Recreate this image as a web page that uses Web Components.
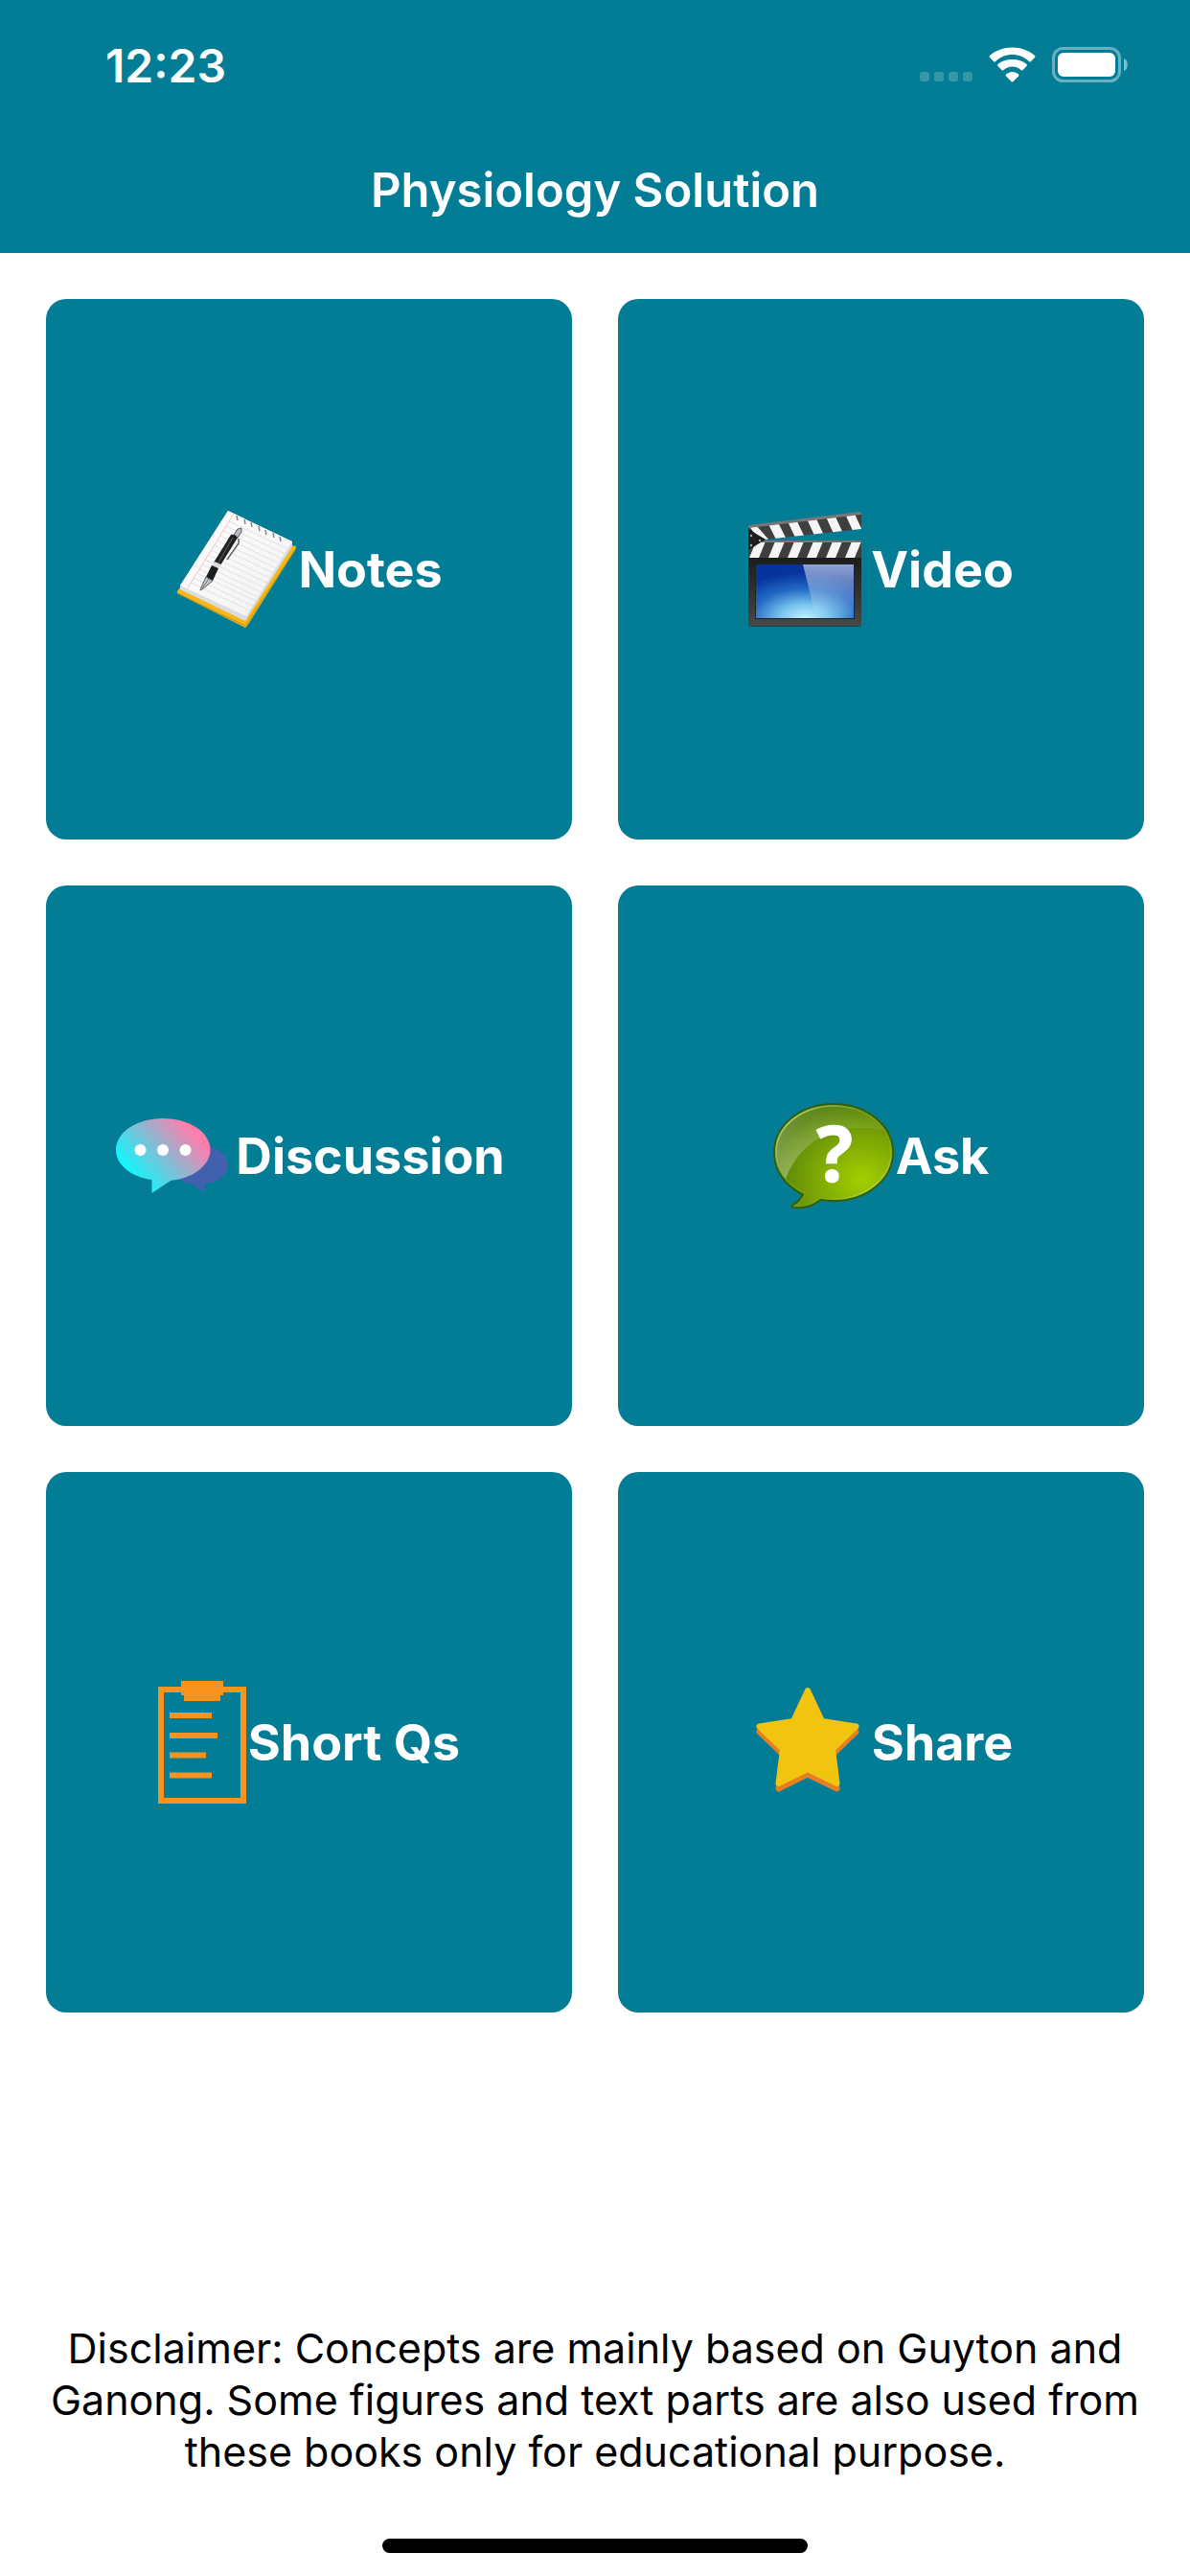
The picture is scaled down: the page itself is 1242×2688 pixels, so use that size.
<!DOCTYPE html>
<html lang="en">
<head>
<meta charset="utf-8">
<meta name="viewport" content="width=device-width, initial-scale=1">
<title>Physiology Solution</title>
<style>
    :root {
        --brand: #037d96;
        --gutter: 48px;
    }

    body {
        margin: 0;
        background: white;
        color: black;
        font-family: Inter, "Liberation Sans", sans-serif;
    }
</style>
</head>
<body>
<app-screen>
    <status-bar slot="header" data-time="12:23"></status-bar>
    <nav-bar slot="header">Physiology Solution</nav-bar>

    <menu-tile>
        <svg slot="icon" width="126" height="126" viewBox="0 0 126 126" aria-hidden="true">
            <defs>
                <linearGradient id="paper" x1="0" y1="0" x2="1" y2="1">
                    <stop offset="0" stop-color="#fff"/>
                    <stop offset="1" stop-color="#f1f1f3"/>
                </linearGradient>
                <clipPath id="sheet"><path d="M55 2 122 34 74 112 5 80Z"/></clipPath>
            </defs>
            <path d="M2 86 5 82 120 38 126 39 125 43 75 122 73 124 2 88Z" fill="#f4b81c"/>
            <path d="M2 88 73 122 126 41" fill="none" stroke="#c98f0b" stroke-width="1"/>
            <path d="M5 80 55 2 122 34 122 39 73 117 5 84Z" fill="#dcdce0"/>
            <path d="M55 2 122 34 74 112 5 80Z" fill="url(#paper)"/>
            <g clip-path="url(#sheet)" stroke="#dfe1e6" stroke-width="1">
                <path d="M56 13 124 45M53 18 121 50M50 23 118 55M47 28 115 60M44 33 112 65M41 38 109 70M37 43 105 75M34 48 102 80M31 53 99 85M28 58 96 90M25 63 93 95M22 67 90 99M19 72 87 104M16 77 84 109"/>
                <path d="M61 5 12 84" stroke="#f6c3c3"/>
            </g>
            <path d="M64 7l1 5M72 11l1 5M79 14l1 5M87 18l1 5M94 22l1 5M102 25l1 5M109 29l1 5" stroke="#85888d" stroke-width="1.5"/>
            <path d="M61 27 65 21 69 20 69 24 65 30Z" fill="#b9bdc1" stroke="#55595d" stroke-width="1"/>
            <path d="M66 31 66 36 54 53" fill="none" stroke="#666" stroke-width="1.5"/>
            <path d="M58 27Q62 26 65 30L47 59 40 56Z" fill="#202123"/>
            <path d="M60 30 45 56" stroke="#53565a" stroke-width="1.2"/>
            <path d="M41 55 48 58 45 62 38 59Z" fill="#d7dadd"/>
            <path d="M38 59 45 62 39 75 32 71Z" fill="#1b1c1e"/>
            <path d="M32 71 39 75 28 84 26 85 27 82Z" fill="#c2c6c9" stroke="#5c6064" stroke-width="1"/>
            <path d="M35 73 28 83" stroke="#74787b" stroke-width="1"/>
        </svg>
        Notes
    </menu-tile>

    <menu-tile>
        <svg slot="icon" width="126" height="126" viewBox="0 0 126 126" aria-hidden="true">
            <defs>
                <linearGradient id="slate" x1="0" y1="0" x2="0" y2="1">
                    <stop offset="0" stop-color="#1c1c1c"/>
                    <stop offset="1" stop-color="#484848"/>
                </linearGradient>
                <radialGradient id="screen" cx=".5" cy="1" r=".85">
                    <stop offset="0" stop-color="#bdf3ff"/>
                    <stop offset=".3" stop-color="#79c4ee"/>
                    <stop offset=".65" stop-color="#2068c4"/>
                    <stop offset="1" stop-color="#06339c"/>
                </radialGradient>
                <linearGradient id="shine" x1="0" y1="0" x2="0" y2="1">
                    <stop offset="0" stop-color="#fff" stop-opacity=".55"/>
                    <stop offset="1" stop-color="#fff" stop-opacity="0"/>
                </linearGradient>
                <clipPath id="upper"><path d="M0 18 118 4V21L18 32 0 22Z"/></clipPath>
                <clipPath id="lower"><path d="M0 34H118V51H0Z"/></clipPath>
            </defs>
            <rect x="0" y="46" width="118" height="77" rx="3" fill="#000" opacity=".35"/>
            <path d="M0 50H118V119Q118 122 115 122H3Q0 122 0 119Z" fill="url(#slate)"/>
            <rect x="7" y="57" width="104" height="58" rx="1" fill="#222"/>
            <rect x="8" y="58" width="102" height="56" fill="url(#screen)"/>
            <path d="M57 58H110V114H71Z" fill="url(#shine)"/>
            <path d="M0 18 118 4V21L18 32 0 22Z" fill="#3f3f3f"/>
            <g clip-path="url(#upper)" fill="#f5f5f5">
                <path d="M0 17H8L23 34H13ZM19 12H30L41 34H30ZM40 11H50L60 32H50ZM60 8H70L80 30H70ZM80 6H90L100 28H90ZM100 3H110L120 25H110Z"/>
            </g>
            <path d="M0 17 116 3 118 4V6L0 20Z" fill="#777"/>
            <path d="M0 33H118V51H0Z" fill="#3f3f3f"/>
            <g clip-path="url(#lower)" fill="#f5f5f5">
                <path d="M1 51 8 34H18L11 51ZM21 51 28 34H38L31 51ZM41 51 48 34H58L51 51ZM61 51 68 34H78L71 51ZM81 51 88 34H98L91 51ZM101 51 108 34H118L111 51Z"/>
            </g>
            <path d="M14 33H118V35H14Z" fill="#777"/>
            <path d="M0 21 18 32 0 43Z" fill="#1d1d1d"/>
            <g fill="#aaa"><circle cx="3" cy="28" r="1.2"/><circle cx="12" cy="33" r="1.2"/><circle cx="3" cy="38" r="1.2"/></g>
        </svg>
        Video
    </menu-tile>

    <menu-tile>
        <svg slot="icon" width="126" height="126" viewBox="0 0 126 126" aria-hidden="true">
            <defs>
                <linearGradient id="bubble" gradientUnits="userSpaceOnUse" x1="22" y1="84" x2="80" y2="34">
                    <stop offset="0" stop-color="#14f5fa"/>
                    <stop offset="1" stop-color="#ff7eac"/>
                </linearGradient>
            </defs>
            <path d="M89 52C106 52 120 61 120 73 120 83 109 91 95.500 92.500V101.500L82 92.500C69 91 60 83 60 73 60 61 72 52 89 52Z" fill="#4160ae"/>
            <path d="M52 24C79.500 24 101.500 38.500 101.500 56.700 101.500 73 83 87 60.500 88.700L40.500 102V88C19 85 3 72.500 3 56.700 3 38.500 25 24 52 24Z" fill="url(#bubble)"/>
            <g fill="#fff"><circle cx="28.500" cy="57" r="6"/><circle cx="52" cy="57" r="6"/><circle cx="75.500" cy="57" r="6"/></g>
        </svg>
        Discussion
    </menu-tile>

    <menu-tile>
        <svg slot="icon" width="126" height="126" viewBox="0 0 126 126" aria-hidden="true">
            <defs>
                <radialGradient id="lime" cx=".74" cy=".73" r=".75">
                    <stop offset="0" stop-color="#a3cf00"/>
                    <stop offset=".55" stop-color="#7ba505"/>
                    <stop offset="1" stop-color="#54800b"/>
                </radialGradient>
                <linearGradient id="gloss" x1=".5" y1="0" x2=".1" y2="1">
                    <stop offset="0" stop-color="#fff" stop-opacity=".04"/>
                    <stop offset="1" stop-color="#fff" stop-opacity=".32"/>
                </linearGradient>
                <linearGradient id="rim" x1="0" y1="0" x2="1" y2="1">
                    <stop offset="0" stop-color="#e2efb8"/>
                    <stop offset=".4" stop-color="#8cb030" stop-opacity=".4"/>
                    <stop offset=".65" stop-color="#8cb030" stop-opacity=".3"/>
                    <stop offset="1" stop-color="#eaf7a8"/>
                </linearGradient>
            </defs>
            <path d="M63 9C97 9 125 31 125 59.500 125 88 97 110 63 110Q56 110 49.500 109C42 115 33 118.500 22 117Q18 116 20 114.500 28 110 31 103.500C12 94 1 78 1 59.500 1 31 29 9 63 9Z" fill="url(#lime)" stroke="#315f08" stroke-width="2"/>
            <path d="M63 10C90 10 109 22 116 36 79 29 33 36 13 87 6 79 2 69 2 59.500 2 31 30 10 63 10Z" fill="url(#gloss)"/>
            <path d="M63 11C96 11 123 32 123 59.500 123 87 96 108 63 108Q55 108 48 107C41 113 32 116 23 115.500Q30 111 33.500 102.500C14 93 3 78 3 59.500 3 32 30 11 63 11Z" fill="none" stroke="url(#rim)" stroke-width="1.5"/>
            <text x="64" y="90" text-anchor="middle" font-family="Open Sans, sans-serif" font-size="80" font-weight="700" fill="#fff" stroke="#fff" stroke-width="1">?</text>
        </svg>
        Ask
    </menu-tile>

    <menu-tile>
        <svg slot="icon" width="92" height="128" viewBox="0 0 92 128" aria-hidden="true">
            <rect x="3" y="9" width="86" height="116" fill="none" stroke="#f7931e" stroke-width="6"/>
            <path fill="#f7931e" fill-rule="evenodd" d="M24 0H68V15H65V21H27V15H24ZM30 6V9H33V6ZM59 6V9H62V6Z"/>
            <path d="M12 36H56M12 57H62M12 77.500H50M12 98.500H56" stroke="#f7931e" stroke-width="6"/>
        </svg>
        Short Qs
    </menu-tile>

    <menu-tile>
        <svg slot="icon" width="126" height="126" viewBox="0 0 126 126" aria-hidden="true">
            <g stroke-width="6" stroke-linejoin="round">
                <path transform="translate(0 5.500)" fill="#e67e22" stroke="#e67e22" d="M61 9 76 41 111.500 46.500 87 70 91.500 106 61 91 30.500 106 35 70 10.500 46.500 46 41Z"/>
                <path fill="#f1c40f" stroke="#f1c40f" d="M61 9 76 41 111.500 46.500 87 70 91.500 106 61 91 30.500 106 35 70 10.500 46.500 46 41Z"/>
            </g>
        </svg>
        Share
    </menu-tile>

    <disclaimer-note slot="footer">Disclaimer: Concepts are mainly based on Guyton and Ganong. Some figures and text parts are also used from these books only for educational purpose.</disclaimer-note>
</app-screen>

<script>
class AppScreen extends HTMLElement {
    constructor() {
        super();
        this.attachShadow({ mode: "open" });

        this.shadowRoot.innerHTML = `
            <style>
                :host {
                    display: flex;
                    flex-direction: column;
                    min-height: 100vh;
                }

                header {
                    background: var(--brand);
                    color: white;
                }

                main {
                    display: grid;
                    grid-template-columns: 1fr 1fr;
                    gap: var(--gutter);
                    padding: var(--gutter);
                }

                footer {
                    display: flex;
                    flex-direction: column;
                    align-items: center;
                    gap: 64px;
                    margin-top: auto;
                    padding-bottom: 24px;
                }

                .home-indicator {
                    width: 444px;
                    height: 15px;
                    border-radius: 8px;
                    background: black;
                }
            </style>

            <header><slot name="header"></slot></header>
            <main><slot></slot></main>
            <footer>
                <slot name="footer"></slot>
                <div class="home-indicator"></div>
            </footer>
        `;
    }
}

class StatusBar extends HTMLElement {
    constructor() {
        super();
        this.attachShadow({ mode: "open" });

        const time = this.dataset.time;

        this.shadowRoot.innerHTML = `
            <style>
                :host {
                    display: flex;
                    justify-content: space-between;
                    align-items: center;
                    height: 136px;
                    padding: 0 64px 0 110px;
                    box-sizing: border-box;
                }

                time {
                    font-size: 48px;
                    font-weight: 600;
                }

                .indicators {
                    display: flex;
                    align-items: flex-end;
                    gap: 17px;
                }

                svg {
                    display: block;
                }
            </style>

            <time>${time}</time>
            <div class="indicators">
                <!-- No signal -->
                <svg width="55" height="38" viewBox="0 0 55 38" fill="#fff" opacity=".2" aria-hidden="true">
                    <rect y="26" width="10" height="10" rx="3"/>
                    <rect x="15" y="26" width="10" height="10" rx="3"/>
                    <rect x="30" y="26" width="10" height="10" rx="3"/>
                    <rect x="45" y="26" width="10" height="10" rx="3"/>
                </svg>
                <!-- Wi-Fi -->
                <svg width="49" height="38" viewBox="0 0 49 38" fill="#fff" aria-hidden="true">
                    <path d="M24.500 8C31 8 37 10.500 42 15Q43 16 44 15L48 11Q49 10 48 9C41.500 3.500 33.500 .5 24.500 .5S7.500 3.500 1 9Q0 10 1 11L5 15Q6 16 7 15C12 10.500 18 8 24.500 8Z"/>
                    <path d="M24.500 20.500C28 20.500 31 22 33.500 24Q34.500 25 35.500 24L39.500 20Q40.500 19 39.500 18C35.500 14.500 30.500 13 24.500 13S13.500 14.500 9.500 18Q8.500 19 9.500 20L13.500 24Q14.500 25 15.500 24C18 22 21 20.500 24.500 20.500Z"/>
                    <path d="M24.500 26C27 26 29 27 31 28.500Q32 29.500 31 30.500L25.500 36Q24.500 37 23.500 36L18 30.500Q17 29.500 18 28.500C20 27 22 26 24.500 26Z"/>
                </svg>
                <!-- Battery -->
                <svg width="80" height="38" viewBox="0 0 80 38" fill="#fff" aria-hidden="true">
                    <rect x="1.500" y="1.500" width="69" height="34" rx="10" fill="none" stroke="#fff" stroke-width="3" opacity=".4"/>
                    <rect x="6" y="6" width="60" height="25" rx="6"/>
                    <path d="M75 12C80 14 80 23 75 25Z" opacity=".5"/>
                </svg>
            </div>
        `;
    }
}

class NavBar extends HTMLElement {
    constructor() {
        super();
        this.attachShadow({ mode: "open" });

        this.shadowRoot.innerHTML = `
            <style>
                :host {
                    display: flex;
                    justify-content: center;
                    align-items: center;
                    height: 128px;
                    padding-bottom: 4px;
                    box-sizing: border-box;
                }

                h1 {
                    margin: 0;
                    font-size: 49px;
                    font-weight: 600;
                }
            </style>

            <h1><slot></slot></h1>
        `;
    }
}

class MenuTile extends HTMLElement {
    constructor() {
        super();
        this.attachShadow({ mode: "open" });

        this.shadowRoot.innerHTML = `
            <style>
                :host {
                    display: block;
                }

                button {
                    display: flex;
                    justify-content: center;
                    align-items: center;
                    gap: 2px;
                    width: 100%;
                    min-height: 564px;
                    padding: 0;
                    border: none;
                    border-radius: 21px;
                    background: var(--brand);
                    color: white;
                    font-family: inherit;
                    font-size: 52px;
                    font-weight: 700;
                    cursor: pointer;
                }

                ::slotted(svg) {
                    flex: none;
                }
            </style>

            <button type="button">
                <slot name="icon"></slot>
                <span><slot></slot></span>
            </button>
        `;
    }
}

class DisclaimerNote extends HTMLElement {
    constructor() {
        super();
        this.attachShadow({ mode: "open" });

        this.shadowRoot.innerHTML = `
            <style>
                :host {
                    display: block;
                    padding: 0 32px;
                }

                p {
                    margin: 0;
                    font-size: 43px;
                    line-height: 54px;
                    text-align: center;
                }
            </style>

            <p><slot></slot></p>
        `;
    }
}

customElements.define("app-screen", AppScreen);
customElements.define("status-bar", StatusBar);
customElements.define("nav-bar", NavBar);
customElements.define("menu-tile", MenuTile);
customElements.define("disclaimer-note", DisclaimerNote);
</script>
</body>
</html>
